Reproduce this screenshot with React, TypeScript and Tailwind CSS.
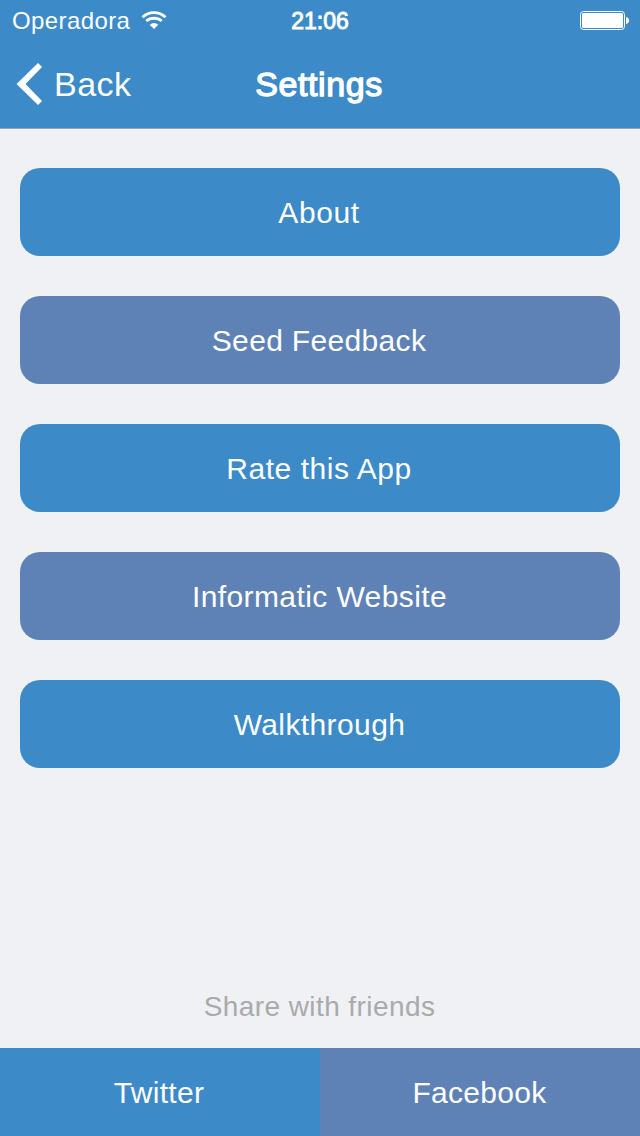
const items = [
  { label: 'About', style: 'bg-[#3c8ac8] tracking-[0.6px] pr-[2px]' },
  { label: 'Seed Feedback', style: 'bg-[#5f82b6] tracking-[0.33px] pr-[2px]' },
  { label: 'Rate this App', style: 'bg-[#3c8ac8] tracking-[0.54px] pr-[2px]' },
  { label: 'Informatic Website', style: 'bg-[#5f82b6] tracking-[0.4px] pr-px' },
  { label: 'Walkthrough', style: 'bg-[#3c8ac8] tracking-[0.4px] pr-px' },
];

export default function App() {
  return (
    <div className="flex h-[1136px] w-[640px] flex-col bg-[#eff1f5] text-white font-['Liberation_Sans',Arial,sans-serif]">
      <header className="h-[129px] border-b border-[#a0a4a9] bg-[#3c8ac8]">
        <div className="grid h-10 grid-cols-3 items-center pl-3 pr-[11px]">
          <div className="flex items-center gap-[11px] text-2xl">
            <span className="pt-[2px] tracking-[0.4px]">Operadora</span>
            <svg width="26" height="18" viewBox="0 0 26 18" fill="none" stroke="white" strokeWidth="2.8">
              <path d="M1.500 6.200C8 0 18 0 24.500 6.200M5.300 10C9.500 6.300 16.500 6.300 20.700 10" />
              <path d="M8.700 13.700Q13 10.300 17.300 13.700L13 18Z" fill="white" stroke="none" />
            </svg>
          </div>
          <span className="pt-[2px] pr-px text-center text-[23px] [-webkit-text-stroke:0.9px_white]">21:06</span>
          <svg className="mt-px justify-self-end" width="49" height="20" viewBox="0 0 49 20">
            <rect x=".5" y=".5" width="44" height="18" rx="3" fill="none" stroke="white" />
            <rect x="2" y="2" width="41" height="15" rx="1.500" fill="white" />
            <path d="M46 6Q49 6.500 49 9.500T46 13Z" fill="white" />
          </svg>
        </div>
        <div className="grid h-[88px] grid-cols-3 items-center px-4">
          <button className="flex items-center gap-[11px] text-[34px] tracking-[0.5px]">
            <svg width="27" height="42" viewBox="0 0 27 42" fill="white">
              <path d="M22 0L26 4L9.500 21L26 38L22 42L.5 21Z" />
            </svg>
            Back
          </button>
          <h1 className="pr-[2px] text-center text-[34px] tracking-[0.6px] [-webkit-text-stroke:1.3px_white]">Settings</h1>
        </div>
      </header>
      <main className="flex flex-1 flex-col gap-10 px-5 pt-[39px]">
        {items.map((item) => (
          <button key={item.label} className={`flex h-[88px] items-center justify-center rounded-[20px] text-[30px] ${item.style}`}>
            {item.label}
          </button>
        ))}
      </main>
      <p className="mb-5 pr-px text-center text-[28px] tracking-[0.42px] text-[#aaaaaa]">Share with friends</p>
      <footer className="grid h-[88px] grid-cols-2 text-[30px] tracking-[0.3px]">
        <button className="bg-[#3c8ac8] pr-[2px]">Twitter</button>
        <button className="bg-[#5f82b6] pr-px">Facebook</button>
      </footer>
    </div>
  );
}
